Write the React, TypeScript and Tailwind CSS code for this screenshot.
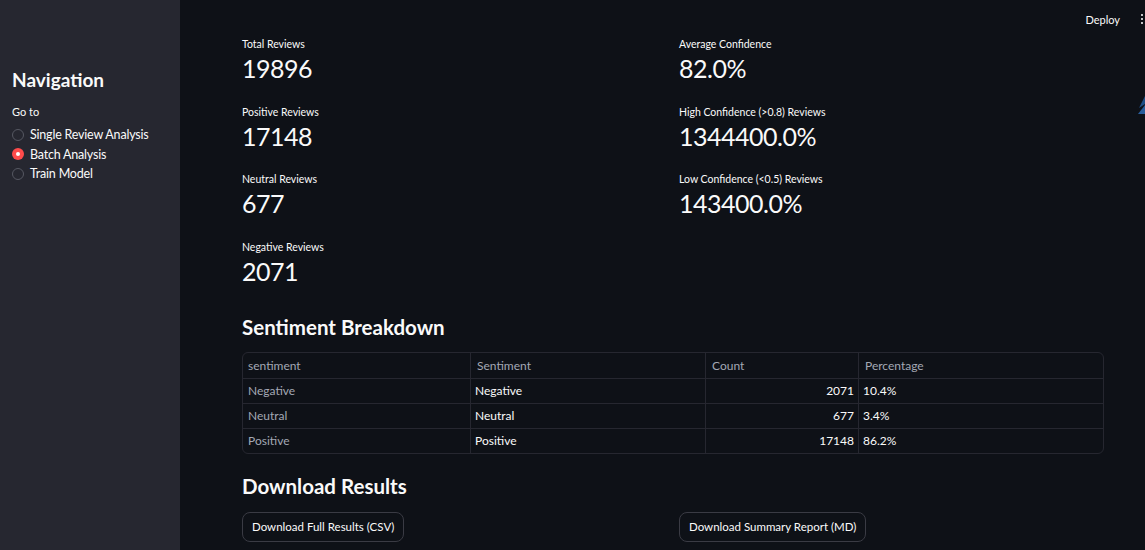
import React from "react";

const metricsLeft = [
  { label: "Total Reviews", value: "19896" },
  { label: "Positive Reviews", value: "17148" },
  { label: "Neutral Reviews", value: "677" },
  { label: "Negative Reviews", value: "2071" },
];

const metricsRight = [
  { label: "Average Confidence", value: "82.0%" },
  { label: "High Confidence (>0.8) Reviews", value: "1344400.0%" },
  { label: "Low Confidence (<0.5) Reviews", value: "143400.0%" },
];

const rows = [
  { idx: "Negative", sentiment: "Negative", count: "2071", pct: "10.4%" },
  { idx: "Neutral", sentiment: "Neutral", count: "677", pct: "3.4%" },
  { idx: "Positive", sentiment: "Positive", count: "17148", pct: "86.2%" },
];

function Metric({ label, value }: { label: string; value: string }) {
  return (
    <div className="h-[67.5px]">
      <div className="text-[10.5px] leading-[15px] text-[#fafafa]">{label}</div>
      <div className="text-[25px] leading-[33px] tracking-[-0.5px] text-[#fafafa]">{value}</div>
    </div>
  );
}

export default function App() {
  return (
    <div
      className="flex w-[1145px] h-[550px] overflow-hidden bg-[#0e1117] text-[#fafafa]"
      style={{ fontFamily: "Lato, 'Noto Sans', sans-serif" }}
    >
      {/* Sidebar */}
      <aside className="w-[180px] shrink-0 bg-[#262730] px-3 pt-[68px]">
        <h2 className="text-[19px] font-bold leading-[24px]">Navigation</h2>
        <div className="mt-[12px] text-[11px] leading-[16px]">Go to</div>
        <div className="mt-[8px] flex flex-col gap-[6.5px]">
          {["Single Review Analysis", "Batch Analysis", "Train Model"].map((t) => (
            <label key={t} className="flex items-center gap-[6px] text-[12.5px] leading-[13px] tracking-[-0.2px]">
              {t === "Batch Analysis" ? (
                <span className="flex h-3 w-3 items-center justify-center rounded-full bg-[#ff4b4b]">
                  <span className="h-1 w-1 rounded-full bg-white" />
                </span>
              ) : (
                <span className="h-3 w-3 rounded-full border border-[#565862] bg-[#262730]" />
              )}
              {t}
            </label>
          ))}
        </div>
      </aside>

      {/* Main */}
      <main className="relative flex-1">
        <div className="absolute right-[25px] top-[13px] text-[11px] leading-[14px]">Deploy</div>
        <div className="absolute right-[2px] top-[14px] flex flex-col gap-[2px]">
          <span className="h-[2px] w-[2px] rounded-full bg-white" />
          <span className="h-[2px] w-[2px] rounded-full bg-white" />
          <span className="h-[2px] w-[2px] rounded-full bg-white" />
        </div>
        <svg className="absolute right-0 top-[96px]" width="8" height="20" viewBox="0 0 8 20">
          <path d="M8 0 L8 8 L2 12 Z" fill="#1f4f86" />
          <path d="M8 9 L8 18 L1 18 Z" fill="#2a5e9c" />
        </svg>

        <div className="ml-[62px] w-[862px] pt-[37px]">
          <div className="grid grid-cols-2 gap-x-[12px]">
            <div>
              {metricsLeft.map((m) => (
                <Metric key={m.label} {...m} />
              ))}
            </div>
            <div>
              {metricsRight.map((m) => (
                <Metric key={m.label} {...m} />
              ))}
            </div>
          </div>

          <h3 className="mt-[6px] text-[20.5px] font-bold leading-[28px]">Sentiment Breakdown</h3>

          <div className="mt-[11px] overflow-hidden rounded-md border border-[#262730] text-[12px]">
            <div className="grid grid-cols-[228px_235px_153px_1fr] h-[25px] text-[#a3a8b4]">
              <div className="flex items-center px-[5px] border-r border-[#262730]">sentiment</div>
              <div className="flex items-center px-[6px] border-r border-[#262730]">Sentiment</div>
              <div className="flex items-center px-[6px] border-r border-[#262730]">Count</div>
              <div className="flex items-center px-[6px]">Percentage</div>
            </div>
            {rows.map((r) => (
              <div
                key={r.idx}
                className="grid grid-cols-[228px_235px_153px_1fr] h-[25px] border-t border-[#262730]"
              >
                <div className="flex items-center px-[5px] border-r border-[#262730] text-[#a3a8b4]">{r.idx}</div>
                <div className="flex items-center px-[4px] border-r border-[#262730]">{r.sentiment}</div>
                <div className="flex items-center justify-end px-[4px] border-r border-[#262730]">{r.count}</div>
                <div className="flex items-center px-[4px]">{r.pct}</div>
              </div>
            ))}
          </div>

          <h3 className="mt-[18px] text-[20.5px] font-bold leading-[28px]">Download Results</h3>

          <div className="mt-[12px] grid grid-cols-2 gap-x-[12px]">
            <div>
              <button className="h-[30px] rounded-lg border border-[#3a3b44] bg-[#0e1117] px-[9px] text-[11.5px]">
                Download Full Results (CSV)
              </button>
            </div>
            <div>
              <button className="h-[30px] rounded-lg border border-[#3a3b44] bg-[#0e1117] px-[9px] text-[11.5px]">
                Download Summary Report (MD)
              </button>
            </div>
          </div>
        </div>
      </main>
    </div>
  );
}
